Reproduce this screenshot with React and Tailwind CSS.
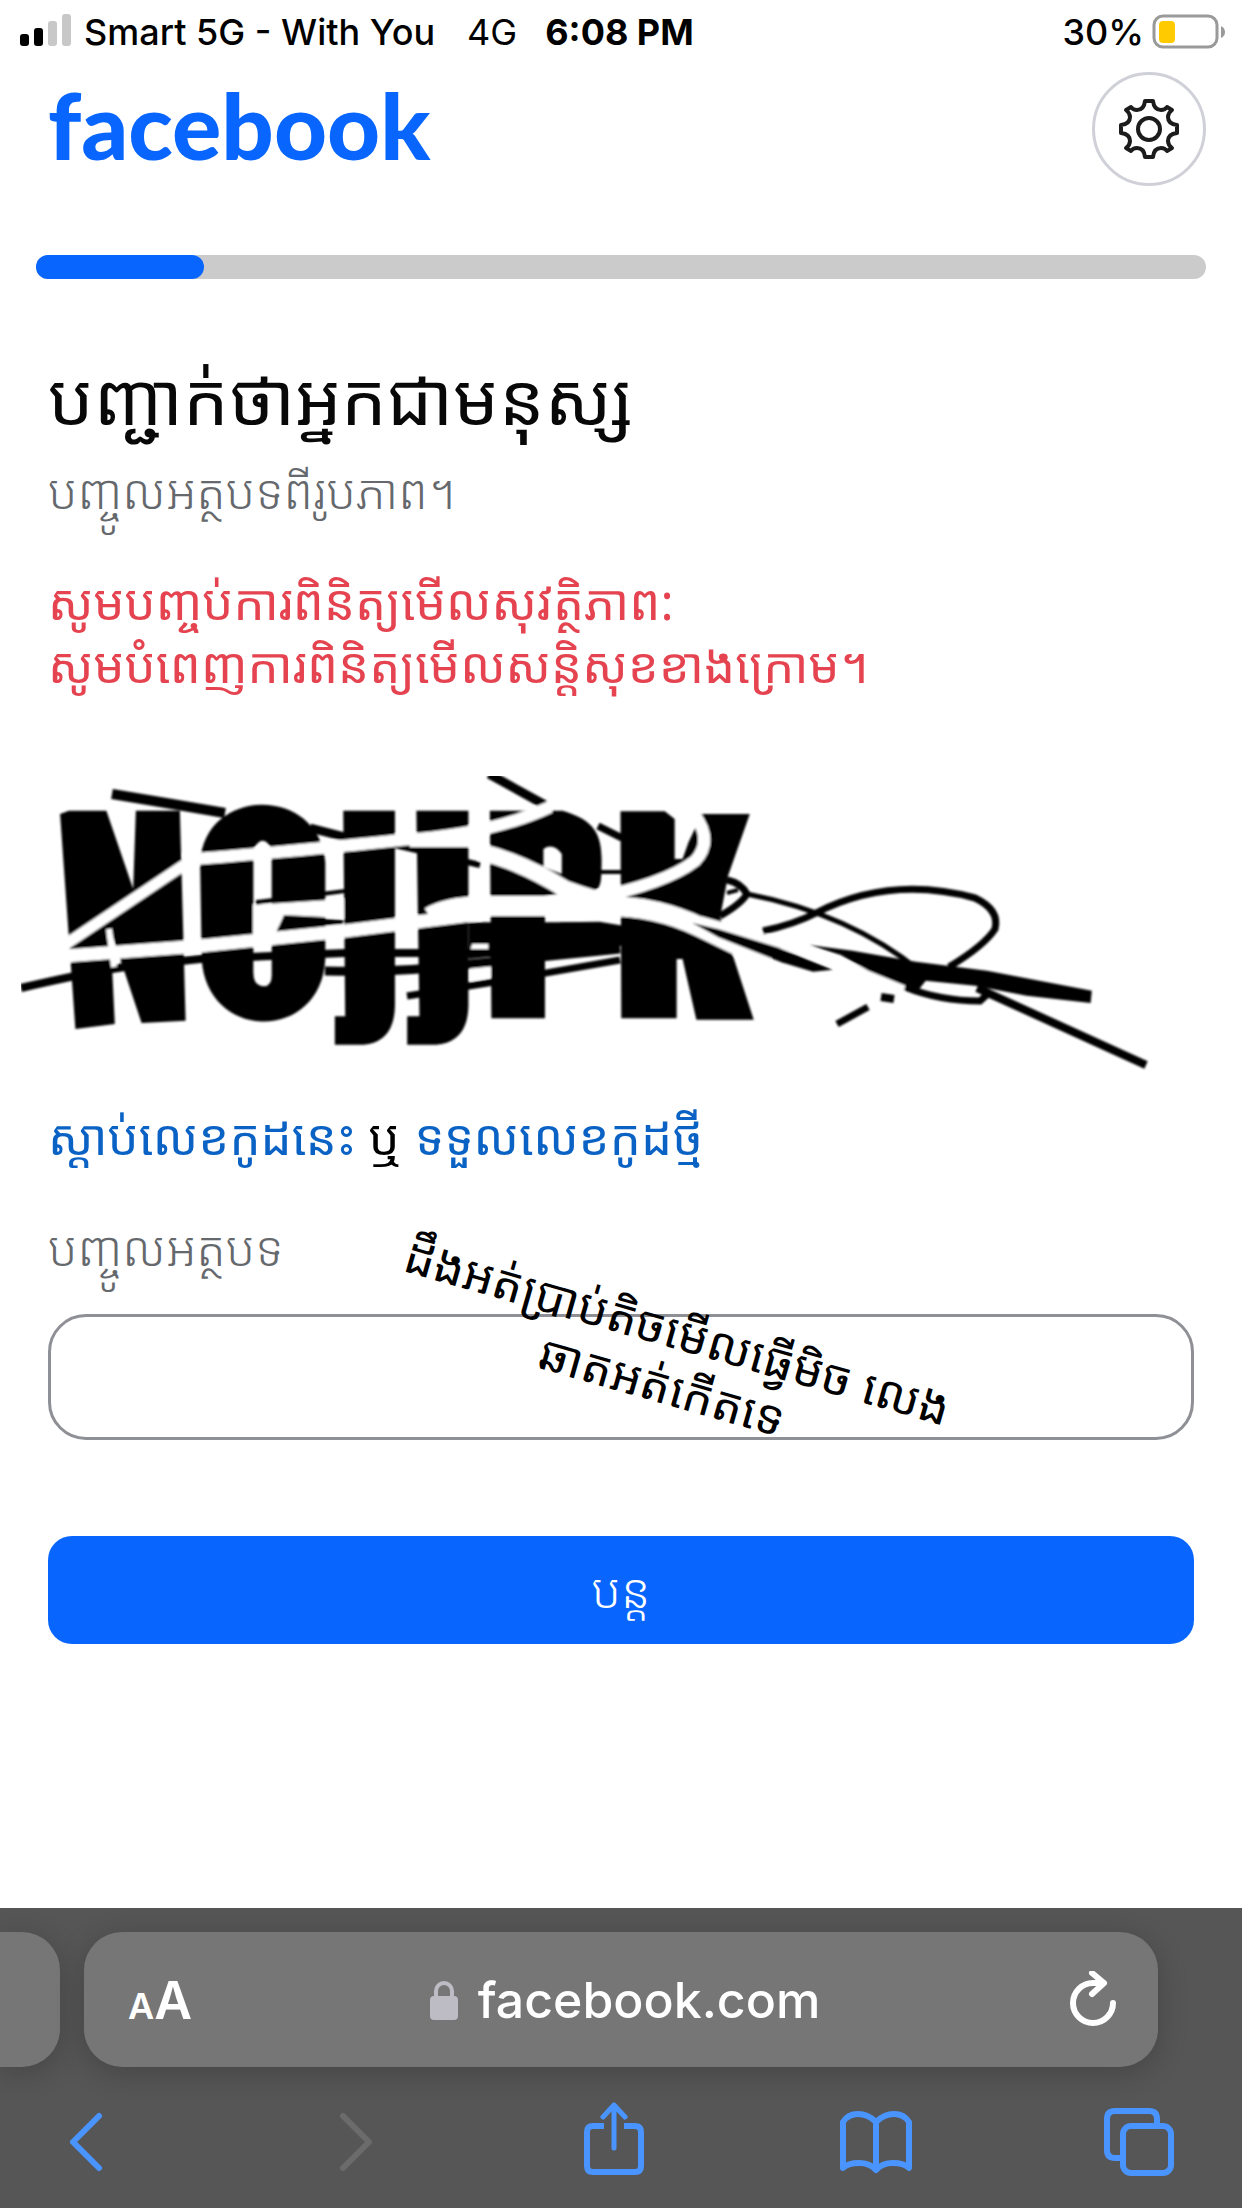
const KHMER = "font-['Noto_Sans_Khmer','Khmer_OS','Noto_Sans','DejaVu_Sans',sans-serif]";

function StatusBar() {
  return (
    <header className="flex h-16 items-center justify-between pl-5 pr-4 text-[36px] leading-[40px] font-medium">
      <div className="flex items-center">
        <svg className="mr-3 h-12 w-[52px]" viewBox="0 0 52 48" aria-hidden="true">
          <rect x="0" y="26" width="9" height="12" rx="3" />
          <rect x="14" y="20" width="9" height="18" rx="3" />
          <rect x="28" y="13" width="9" height="25" rx="3" fill="#c8c8c8" />
          <rect x="42" y="6" width="9" height="32" rx="3" fill="#c8c8c8" />
        </svg>
        <span>Smart 5G - With You</span>
        <span className="ml-8 font-normal">4G</span>
        <span className="ml-7 font-bold">6:08 PM</span>
      </div>
      <div className="flex items-center gap-2">
        <span>30%</span>
        <svg className="h-9 w-[74px]" viewBox="0 0 74 36" aria-hidden="true">
          <rect x="2" y="2" width="63" height="31" rx="9" fill="none" stroke="#9a9a9a" strokeWidth="3" />
          <rect x="7" y="7" width="16" height="22" rx="4" fill="#ffca00" />
          <path d="M69 12q4 2 4 6t-4 6z" fill="#9a9a9a" />
        </svg>
      </div>
    </header>
  );
}

function GearIcon() {
  return (
    <svg className="size-[62px]" viewBox="-31 -31 62 62" fill="none" stroke="#1c1c1c" strokeWidth="4" strokeLinejoin="round" aria-hidden="true">
      <circle r="11" />
      <path d="M-4 -28H4Q5 -19 12 -19Q16 -19 18 -22L23 -19Q19 -16 19 -12Q19 -5 28 -4V4Q19 5 19 12Q19 16 23 19L18 22Q16 19 12 19Q5 19 4 28H-4Q-5 19 -12 19Q-16 19 -18 22L-23 19Q-19 16 -19 12Q-19 5 -28 4V-4Q-19 -5 -19 -12Q-19 -16 -23 -19L-18 -22Q-16 -19 -12 -19Q-5 -19 -4 -28Z" />
    </svg>
  );
}

function Challenge() {
  return (
    <svg className="-mx-[27px] block w-[calc(100%+54px)]" viewBox="21 777 1200 300" role="img" aria-label="CAPTCHA">
      <defs>
        <filter id="soft">
          <feGaussianBlur stdDeviation="1.2" />
        </filter>
      </defs>
      <g filter="url(#soft)">
        <g transform="translate(0 760) scale(.3827 .3333)">
          <path d="M157 165L180 155H278L348 390L355 155H470L485 785L370 792L288 510L300 795L197 810Z" />
          <path fillRule="evenodd" d="M523 310C535 80 835 80 850 310V600C840 850 540 850 527 600ZM662 270Q687 220 710 270V640Q712 682 690 682Q662 682 662 640Z" />
          <path d="M897 155H1032V740Q1030 850 950 857H875V772H902Z" />
          <path d="M1088 155H1224V740Q1222 850 1140 857H1064V772H1096Z" />
          <path fillRule="evenodd" d="M1280 155H1470C1540 180 1572 210 1572 300C1572 370 1570 385 1556 392L1424 410V778H1284ZM1420 270Q1445 250 1468 285V345L1420 325Z" />
          <path d="M1224 490H1568V560L1224 600Z" />
          <path d="M1234 555H1276V575H1228ZM1230 620H1282V655L1230 665Z" fill="#fff" />
        </g>
        <g transform="translate(560 760) scale(.3954 .3333)">
          <path d="M153 157H265L290 180V300H310L325 250L345 200L350 165H480L425 350L405 475L440 600L490 782H345L310 600H295V778H155Z" />
          <path d="M0 490L100 488L160 500V560L0 568Z" />
        </g>
        <g fill="none" stroke="#000" strokeWidth="7">
          <path d="M112 795L172 805L225 814" strokeWidth="10" />
          <path d="M310 829L345 838" strokeWidth="9" />
          <path d="M489 775L545 806" strokeWidth="9" />
          <path d="M598 827L622 839" />
          <path d="M600 873H625" strokeWidth="4" />
          <path d="M21 989Q80 975 125 968L200 960L345 954H560L620 948" strokeWidth="8" />
          <path d="M325 972Q400 974 470 965L620 950" strokeWidth="9" />
          <path d="M407 997L500 982L620 961" strokeWidth="7" />
          <path d="M395 846L480 866" strokeWidth="6" />
        </g>
        <path d="M253 906L344 900V919L284 916L276 934L253 937Z" fill="#fff" />
        <path d="M256 906L345 894L345 890L256 901Z" />
        <g fill="none" stroke="#fff">
          <path d="M63 947L184 866" strokeWidth="11" />
          <path d="M184 861Q330 849 400 841Q490 836 550 808" strokeWidth="12" />
          <path d="M410 843H480" strokeWidth="10" />
          <path d="M65 957L200 947L345 932L480 915" strokeWidth="13" />
          <path d="M430 918Q446 908 480 907H600Q655 906 700 928L770 962" strokeWidth="20" />
          <path d="M480 853Q520 862 565 890Q620 910 660 912" strokeWidth="17" />
          <path d="M694 815Q714 842 695 862Q665 885 590 900" strokeWidth="12" />
          <path d="M700 922L800 950L905 990" strokeWidth="10" />
          <path d="M109 930L114 968" strokeWidth="6" />
        </g>
        <path d="M277 931L285 917L343 921V925Z" />
        <g transform="translate(560 760) scale(.3954 .3333)">
          <path d="M335 492L400 510L550 565L690 632L640 638L560 610L400 535Z" />
          <path d="M630 558L740 575L900 608L1080 635L1345 695L1342 732L1180 710L1050 680L925 665L905 695L780 635L710 588Z" />
        </g>
        <g fill="none" stroke="#000" strokeWidth="7">
          <path d="M763 932Q795 925 816 914Q890 876 975 899Q1000 911 995 930Q985 946 949 968" />
          <path d="M727 881Q741 884 747 895Q741 905 720 917" />
          <path d="M747 895Q850 915 920 972" strokeWidth="5" />
          <path d="M905 988Q940 1002 980 1002L991 992" />
          <path d="M977 989L1146 1066" strokeWidth="8" />
          <path d="M837 1025L868 1008" />
          <path d="M881 998L894 1000" strokeWidth="8" />
          <path d="M727 894L738 891" strokeWidth="4" />
        </g>
      </g>
    </svg>
  );
}

function IconButton({ label, disabled, children }) {
  return (
    <button type="button" aria-label={label} disabled={disabled} className="flex h-20 w-[76px] items-center justify-center">
      <svg className="h-20 w-[76px]" viewBox="0 0 76 80" fill="none" stroke={disabled ? "#6b6b6b" : "#4a94ff"} strokeWidth="6" strokeLinecap="round" strokeLinejoin="round" aria-hidden="true">
        {children}
      </svg>
    </button>
  );
}

function BrowserBar() {
  return (
    <footer className="h-[300px] overflow-hidden bg-[#565656] pt-6 text-white">
      <div className="flex gap-6">
        <div className="h-[135px] w-[60px] rounded-r-[38px] bg-[#767676] shadow-[0_6px_30px_rgba(0,0,0,0.2)]" />
        <div className="mr-[84px] flex h-[135px] flex-1 items-center justify-between rounded-[38px] bg-[#767676] pl-11 pr-10 shadow-[0_6px_30px_rgba(0,0,0,0.2)]">
          <button type="button" aria-label="Page settings" className="flex w-[68px] items-baseline pt-2 font-['Inter',sans-serif] font-semibold">
            <span className="text-[36px] leading-[60px]">A</span>
            <span className="text-[52px] leading-[60px]">A</span>
          </button>
          <div className="flex items-center gap-5">
            <svg className="h-10 w-7" viewBox="0 0 28 40" aria-hidden="true">
              <rect x="0" y="16" width="28" height="24" rx="4" fill="#bdbcc4" />
              <path d="M6 18V11a8 8 0 0 1 16 0v7" fill="none" stroke="#bdbcc4" strokeWidth="4" />
            </svg>
            <span className="text-[50px] leading-[60px] font-medium">facebook.com</span>
          </div>
          <button type="button" aria-label="Reload" className="flex w-16 justify-end">
            <svg className="h-[58px] w-[48px]" viewBox="0 0 48 58" fill="none" stroke="#fff" strokeWidth="6" strokeLinecap="round" strokeLinejoin="round" aria-hidden="true">
              <path d="M32 12H23A20 20 0 1 0 43 32" />
              <path d="M22 2L34 12L22 23" />
            </svg>
          </button>
        </div>
      </div>
      <nav className="mt-[35px] flex justify-between pl-[49px] pr-[65px]">
        <IconButton label="Back">
          <path d="M50 14L24 40L50 66" />
        </IconButton>
        <IconButton label="Forward" disabled>
          <path d="M31 14L57 40L31 66" />
        </IconButton>
        <IconButton label="Share">
          <path d="M29 24H18Q12 24 12 30V64Q12 70 18 70H60Q66 70 66 64V30Q66 24 60 24H49" strokeLinecap="butt" />
          <path d="M39 46V4M28 15L39 3L50 15" strokeWidth="5" />
        </IconButton>
        <IconButton label="Bookmarks">
          <path d="M38 20Q30 12 20 12Q10 12 5 20V66Q10 61 21 61Q32 61 38 68Q44 61 55 61Q66 61 71 66V20Q66 12 56 12Q46 12 38 20V67" />
        </IconButton>
        <IconButton label="Tabs">
          <path d="M56 24V17Q56 9 48 9H14Q6 9 6 17V48Q6 56 14 56H22" strokeLinecap="butt" />
          <rect x="22" y="24" width="48" height="47" rx="8" />
        </IconButton>
      </nav>
    </footer>
  );
}

export default function App() {
  return (
    <div className="flex min-h-screen flex-col bg-white font-['Inter',sans-serif] text-black">
      <StatusBar />
      <main className="flex flex-1 flex-col px-9">
        <div className="flex items-start justify-between pt-2 pl-3">
          <div className="font-['Lato',sans-serif] text-[92px] leading-[106px] font-black text-[#0866ff]">facebook</div>
          <button type="button" aria-label="Settings" className="flex size-[114px] items-center justify-center rounded-full border-[3px] border-[#d0d1d8]">
            <GearIcon />
          </button>
        </div>
        <div role="progressbar" aria-label="Progress" aria-valuenow={14} aria-valuemin={0} aria-valuemax={100} className="mt-[69px] h-6 rounded-full bg-[#cbcbcb]">
          <div className="h-6 w-[168px] rounded-full bg-[#0866ff]" />
        </div>
        <form className={`flex flex-col px-3 pt-[70px] ${KHMER}`} onSubmit={(e) => e.preventDefault()}>
          <h1 className="text-[72px] leading-[96px] font-normal text-[#080809]">បញ្ជាក់ថាអ្នកជាមនុស្ស</h1>
          <p className="mt-1.5 text-[48px] leading-[80px] font-light text-[#65686c]">បញ្ចូលអត្ថបទពីរូបភាព។</p>
          <p className="mt-[39px] text-[49px] leading-[63px] text-[#e4434f]">
            សូមបញ្ចប់ការពិនិត្យមើលសុវត្ថិភាព:
            <br />
            សូមបំពេញការពិនិត្យមើលសន្តិសុខខាងក្រោម។
          </p>
          <div className="mt-20">
            <Challenge />
          </div>
          <p className="mt-7 text-[49px] leading-[64px]">
            <a href="#audio" className="text-[#0a62c4]">ស្តាប់លេខកូដនេះ</a> ឬ{" "}
            <a href="#new" className="text-[#0a62c4]">ទទួលលេខកូដថ្មី</a>
          </p>
          <label htmlFor="code" className="mt-12 text-[48px] leading-[64px] font-light text-[#65686c]">បញ្ចូលអត្ថបទ</label>
          <div className="relative mt-[34px]">
            <input id="code" type="text" className="block h-[126px] w-full rounded-[38px] border-[3px] border-[#8f9096] px-8 text-[48px]" />
            <div className="pointer-events-none absolute top-[-12px] left-[332px] w-[580px] rotate-16 text-center text-[48px] leading-[56px] whitespace-nowrap">
              ដឹងអត់ប្រាប់តិចមើលធ្វើមិច លេង
              <br />
              ឆាតអត់កើតទេ
            </div>
          </div>
          <button type="submit" className="mt-24 h-[108px] rounded-3xl bg-[#0866ff] text-[48px] leading-[64px] font-light text-white">បន្ត</button>
        </form>
      </main>
      <BrowserBar />
    </div>
  );
}
